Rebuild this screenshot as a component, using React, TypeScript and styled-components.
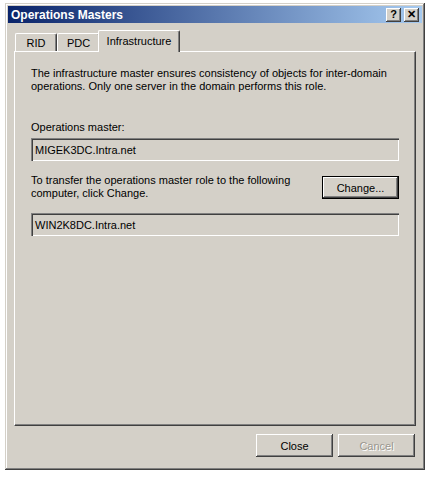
import styled, { createGlobalStyle } from 'styled-components';

const GlobalStyle = createGlobalStyle`
  html, body {
    margin: 0;
    padding: 0;
    background: #ffffff;
  }
  body {
    font-family: 'Liberation Sans', Arial, sans-serif;
    font-size: 11px;
    color: #000;
  }
`;

const Page = styled.div`
  padding: 3px 0 0 5px;
`;

const Window = styled.div`
  width: 420px;
  height: 467px;
  box-sizing: border-box;
  padding: 3px;
  background: #d4d0c8;
  box-shadow: inset -1px -1px #404040, inset 1px 1px #d4d0c8,
    inset -2px -2px #808080, inset 2px 2px #ffffff;
  display: flex;
  flex-direction: column;
`;

const TitleBar = styled.div`
  height: 19px;
  display: flex;
  align-items: center;
  justify-content: space-between;
  padding: 0 3px 0 3px;
  background: linear-gradient(to right, #0a246a, #a6caf0);
`;

const Title = styled.span`
  color: #fff;
  font-weight: bold;
  font-size: 12px;
`;

const TitleButtons = styled.div`
  display: flex;
  gap: 3px;
`;

const TitleButton = styled.div`
  width: 15px;
  height: 14px;
  box-sizing: border-box;
  background: #d4d0c8;
  box-shadow: inset -1px -1px #404040, inset 1px 1px #ffffff,
    inset -2px -2px #808080;
  display: flex;
  align-items: center;
  justify-content: center;
  font-weight: bold;
  font-size: 11px;
  line-height: 1;
`;

const Body = styled.div`
  flex: 1;
  display: flex;
  flex-direction: column;
  padding: 6px 6px 10px 6px;
`;

const TabRow = styled.div`
  display: flex;
  align-items: flex-end;
  height: 22px;
  padding-left: 1px;
  position: relative;
  z-index: 1;
`;

const Tab = styled.div<{ $active?: boolean; $w: number }>`
  width: ${({ $w }) => $w}px;
  height: ${({ $active }) => ($active ? 22 : 18)}px;
  margin: ${({ $active }) => ($active ? '0 -2px -1px -2px' : '0')};
  box-sizing: border-box;
  background: #d4d0c8;
  border-top: 1px solid #ffffff;
  border-left: 1px solid #ffffff;
  border-right: 1px solid #404040;
  box-shadow: inset -1px 0 #808080;
  border-radius: 2px 2px 0 0;
  display: flex;
  align-items: center;
  justify-content: center;
  padding-bottom: ${({ $active }) => ($active ? 2 : 0)}px;
  font-size: 11px;
  position: relative;
  z-index: ${({ $active }) => ($active ? 2 : 1)};
`;

const Panel = styled.div`
  height: 375px;
  box-sizing: border-box;
  padding: 15px 16px;
  border-top: 1px solid #ffffff;
  border-left: 1px solid #ffffff;
  border-right: 1px solid #404040;
  border-bottom: 1px solid #404040;
  box-shadow: inset -1px -1px #808080;
`;

const Text = styled.div`
  line-height: 13px;
  font-size: 11px;
`;

const Label = styled(Text)`
  margin-top: 28px;
`;

const Field = styled.div<{ $top: number }>`
  margin-top: ${({ $top }) => $top}px;
  height: 23px;
  box-sizing: border-box;
  padding: 0 4px;
  display: flex;
  align-items: center;
  background: #d4d0c8;
  box-shadow: inset 1px 1px #808080, inset 2px 2px #404040,
    inset -1px -1px #ffffff, inset -2px -2px #d4d0c8;
  font-size: 11px;
`;

const TransferRow = styled.div`
  margin-top: 13px;
  display: flex;
  justify-content: space-between;
  align-items: flex-start;
`;

const Button = styled.button<{ $default?: boolean; $disabled?: boolean }>`
  width: 77px;
  height: 23px;
  margin-top: ${({ $default }) => ($default ? 2 : 0)}px;
  box-sizing: border-box;
  font-family: 'Liberation Sans', Arial, sans-serif;
  font-size: 11px;
  background: #d4d0c8;
  border: ${({ $default }) => ($default ? '1px solid #000' : 'none')};
  box-shadow: inset -1px -1px #404040, inset 1px 1px #ffffff,
    inset -2px -2px #808080;
  color: ${({ $disabled }) => ($disabled ? '#9a978f' : '#000')};
  text-shadow: ${({ $disabled }) => ($disabled ? '1px 1px #ffffff' : 'none')};
  padding: 0;
`;

const Footer = styled.div`
  margin-top: 8px;
  display: flex;
  justify-content: flex-end;
  gap: 5px;
  padding-right: 1px;
`;

const App = () => {
  return (
    <Page>
      <GlobalStyle />
      <Window>
        <TitleBar>
          <Title>Operations Masters</Title>
          <TitleButtons>
            <TitleButton>?</TitleButton>
            <TitleButton>✕</TitleButton>
          </TitleButtons>
        </TitleBar>
        <Body>
          <TabRow>
            <Tab $w={42}>RID</Tab>
            <Tab $w={43}>PDC</Tab>
            <Tab $w={82} $active>
              Infrastructure
            </Tab>
          </TabRow>
          <Panel>
            <Text>
              The infrastructure master ensures consistency of objects for inter-domain
              <br />
              operations. Only one server in the domain performs this role.
            </Text>
            <Label>Operations master:</Label>
            <Field $top={4}>MIGEK3DC.Intra.net</Field>
            <TransferRow>
              <Text>
                To transfer the operations master role to the following
                <br />
                computer, click Change.
              </Text>
              <Button $default>Change...</Button>
            </TransferRow>
            <Field $top={13}>WIN2K8DC.Intra.net</Field>
          </Panel>
          <Footer>
            <Button>Close</Button>
            <Button $disabled>Cancel</Button>
          </Footer>
        </Body>
      </Window>
    </Page>
  );
};

export default App;
